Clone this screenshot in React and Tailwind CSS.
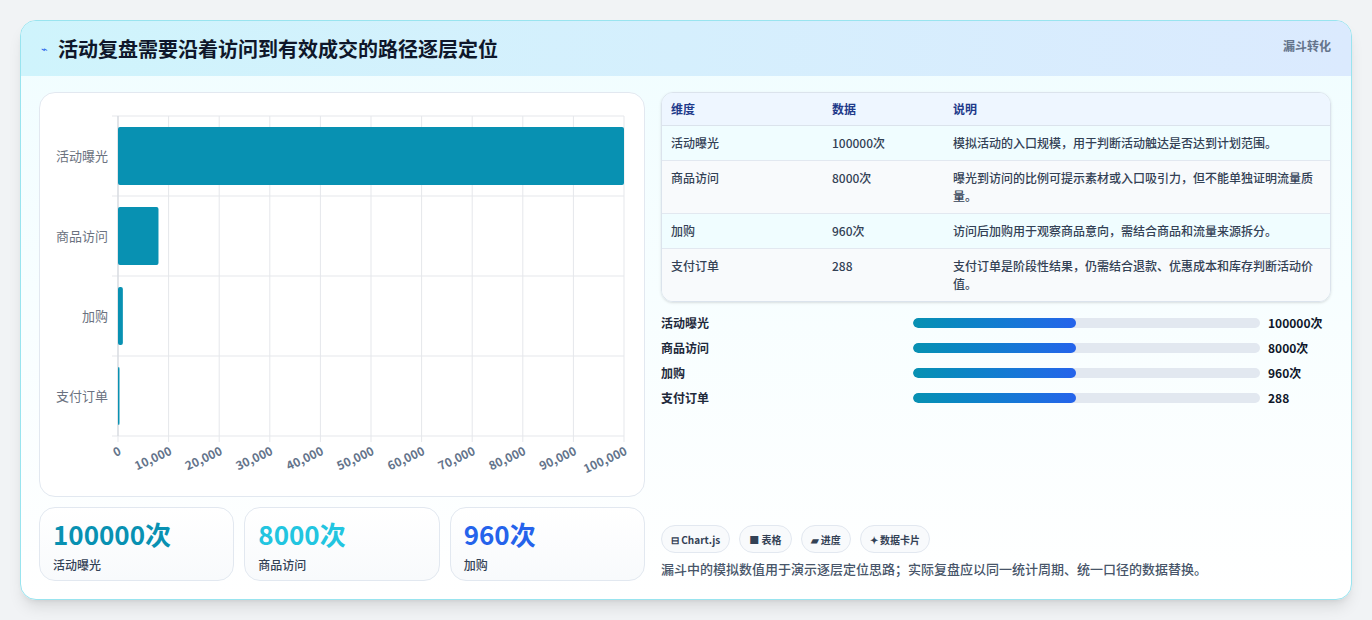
const F = { fontFamily: '"Noto Sans CJK SC", "Noto Sans", sans-serif' };
const rows = [
  ['活动曝光', '100000次', '模拟活动的入口规模，用于判断活动触达是否达到计划范围。', 100000],
  ['商品访问', '8000次', '曝光到访问的比例可提示素材或入口吸引力，但不能单独证明流量质量。', 8000],
  ['加购', '960次', '访问后加购用于观察商品意向，需结合商品和流量来源拆分。', 960],
  ['支付订单', '288', '支付订单是阶段性结果，仍需结合退款、优惠成本和库存判断活动价值。', 288],
];

function Chart() {
  const x0 = 78, w = 506, y0 = 23, h = 320;
  const ticks = [0,10000,20000,30000,40000,50000,60000,70000,80000,90000,100000];
  return (
    <svg width="604" height="402" style={F}>
      {ticks.map((t, i) => {
        const x = x0 + (w * i) / 10;
        return <line key={i} x1={x} x2={x} y1={y0} y2={y0 + h + 6} stroke="#e5e7eb" />;
      })}
      {[0,1,2,3,4].map(i => <line key={i} x1={x0 - 6} x2={x0 + w} y1={y0 + 80 * i} y2={y0 + 80 * i} stroke="#e5e7eb" />)}
      <line x1={x0} x2={x0} y1={y0} y2={y0+h} stroke="#d1d5db" />
      {rows.map((r, i) => (
        <g key={i}>
          <rect x={x0} y={y0 + 80 * i + 11} width={Math.max(1.5, (w * r[3]) / 100000)} height={58} rx="2" fill="#0891b2" />
          <text x={x0 - 10} y={y0 + 80 * i + 45} textAnchor="end" fontSize="13" fill="#6b7280">{r[0]}</text>
        </g>
      ))}
      {ticks.map((t, i) => {
        const x = x0 + (w * i) / 10;
        return <text key={i} x={x + 4} y={y0 + h + 18} textAnchor="end" fontSize="12" fontWeight="600" fill="#64748b" transform={`rotate(-25 ${x + 4} ${y0 + h + 18})`}>{t.toLocaleString('en-US')}</text>;
      })}
    </svg>
  );
}

export default function App() {
  return (
    <div className="w-[1372px] h-[620px] bg-[#f1f3f5] pt-5 px-5" style={F}>
      <div className="h-[580px] rounded-2xl border border-[#99e4ef] bg-gradient-to-b from-[#f0fdff] to-white overflow-hidden shadow-lg flex flex-col">
        <div className="h-[55px] shrink-0 bg-gradient-to-r from-[#cff4fc] to-[#dbeafe] flex items-center justify-between px-5">
          <div className="flex items-center gap-2.5">
            <span className="text-[#2563eb] text-[11px]">⌁</span>
            <span className="text-[20px] font-bold text-[#0f172a]">活动复盘需要沿着访问到有效成交的路径逐层定位</span>
          </div>
          <span className="text-[12px] font-semibold text-[#64748b] self-start mt-4">漏斗转化</span>
        </div>
        <div className="flex gap-4 pl-[18px] pr-5 pt-4">
          <div className="w-[606px] flex flex-col gap-[10px]">
            <div className="h-[405px] rounded-2xl border border-[#e2e8f0] bg-white"><Chart /></div>
            <div className="grid grid-cols-3 gap-[10px]">
              {[['100000次', '活动曝光', 'text-[#0891b2]'], ['8000次', '商品访问', 'text-[#22c5e0]'], ['960次', '加购', 'text-[#2563eb]']].map(([v, l, c]) => (
                <div key={l} className="h-[74px] rounded-2xl border border-[#e2e8f0] bg-gradient-to-b from-white to-[#f8fafc] px-[13px] pt-[8px]">
                  <div className={`text-[26px] font-bold leading-[36px] ${c}`}>{v}</div>
                  <div className="text-[12px] text-[#334155] font-medium mt-[4px]">{l}</div>
                </div>
              ))}
            </div>
          </div>
          <div className="flex-1 flex flex-col">
            <div className="rounded-xl border border-[#dbe3ec] overflow-hidden text-[12px] text-[#334155] shadow-sm">
              <div className="flex h-[33px] items-center bg-[#eef6ff] font-semibold text-[#1e3a8a] border-b border-[#dbe3ec]">
                <div className="w-[170px] pl-[9px]">维度</div><div className="w-[121px]">数据</div><div className="flex-1">说明</div>
              </div>
              {rows.map((r, i) => (
                <div key={i} className={`flex py-[8px] leading-[18px] font-medium ${i % 2 ? 'bg-[#f8fafc]' : 'bg-[#f0fdff]'} ${i < 3 ? 'border-b border-[#e2e8f0]' : ''}`}>
                  <div className="w-[170px] pl-[9px]">{r[0]}</div><div className="w-[121px]">{r[1]}</div><div className="flex-1 pr-4">{r[2]}</div>
                </div>
              ))}
            </div>
            <div className="flex flex-col gap-[7px] mt-[12px]">
              {rows.map((r, i) => (
                <div key={i} className="flex items-center h-[18px] text-[12px] font-semibold text-[#1e293b]">
                  <div className="w-[252px]">{r[0]}</div>
                  <div className="w-[347px] h-[10px] rounded-full bg-[#e2e8f0] overflow-hidden"><div className="w-[47%] h-full rounded-full bg-gradient-to-r from-[#0891b2] to-[#2563eb]" /></div>
                  <div className="ml-[8px] text-[#0f172a]">{r[1]}</div>
                </div>
              ))}
            </div>
            <div className="flex gap-[9px] mt-[118px]">
              {['⊟ Chart.js', '■ 表格', '▰ 进度', '✦ 数据卡片'].map(t => (
                <span key={t} className="h-[28px] px-[9px] rounded-full border border-[#e2e8f0] bg-[#f8fafc] text-[10px] font-semibold text-[#334155] flex items-center">{t}</span>
              ))}
            </div>
            <div className="mt-[6px] text-[13px] text-[#475569] font-medium">漏斗中的模拟数值用于演示逐层定位思路；实际复盘应以同一统计周期、统一口径的数据替换。</div>
          </div>
        </div>
      </div>
    </div>
  );
}
